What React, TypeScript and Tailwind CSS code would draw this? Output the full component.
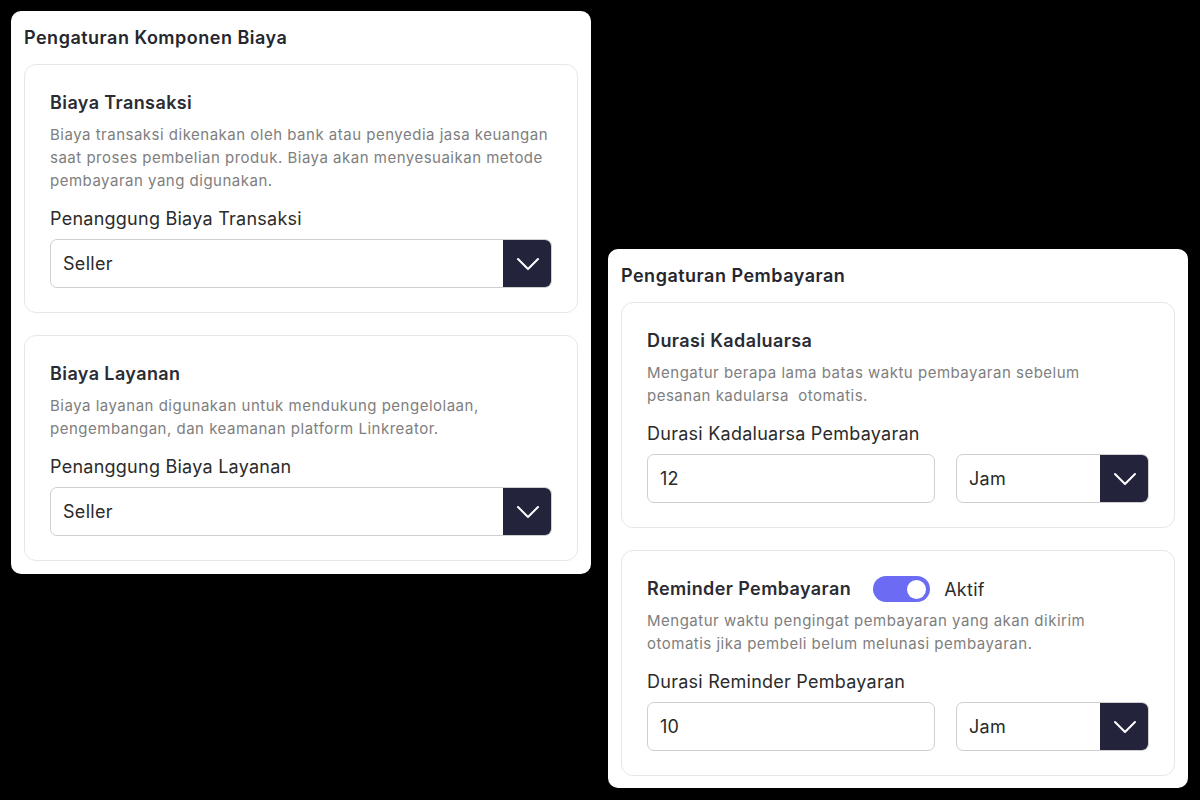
import React from 'react';

const font = { fontFamily: '"Inter", "Noto Sans", sans-serif' };

function Chevron() {
  return (
    <svg width="24" height="14" viewBox="0 0 24 14" fill="none">
      <path d="M2 2l10 10L22 2" stroke="white" strokeWidth="2" strokeLinecap="round" strokeLinejoin="round" />
    </svg>
  );
}

function Select({ value, className = '' }: { value: string; className?: string }) {
  return (
    <div className={`flex h-[49px] rounded-[7px] border border-[#cfcfcf] bg-white overflow-hidden ${className}`}>
      <div className="flex-1 flex items-center pl-[12px] text-[18px] tracking-[0.3px] text-[#2a2a2a]">{value}</div>
      <div className="w-[49px] -my-px -mr-px flex items-center justify-center bg-[#23233b] rounded-r-[8px]">
        <Chevron />
      </div>
    </div>
  );
}

function TextInput({ value }: { value: string }) {
  return (
    <div className="flex-1 h-[49px] flex items-center pl-[12px] rounded-[7px] border border-[#cfcfcf] bg-white text-[18px] tracking-[0.3px] text-[#2a2a2a]">
      {value}
    </div>
  );
}

function Section({
  title,
  extra,
  lines,
  label,
  children,
}: {
  title: string;
  extra?: React.ReactNode;
  lines: string[];
  label: string;
  children: React.ReactNode;
}) {
  return (
    <div className="rounded-[12px] border border-[#e7e7e7] px-[25px] pt-[26px] pb-[24px]">
      <div className="flex items-center h-[24px]">
        <h3 className="text-[18px] font-semibold tracking-[0.4px] text-[#2b2b33] leading-[24px]">{title}</h3>
        {extra}
      </div>
      <p className="mt-[8px] text-[15px] leading-[23px] tracking-[0.5px] text-[#7e7e7e]">
        {lines.map((l, i) => (
          <span key={i} className="block whitespace-pre">{l}</span>
        ))}
      </p>
      <div className="mt-[14px] text-[18px] leading-[26px] tracking-[0.25px] text-[#2b2b2b]">{label}</div>
      <div className="mt-[7px]">{children}</div>
    </div>
  );
}

function Toggle() {
  return (
    <div className="flex items-center ml-[22px] gap-[14px]">
      <div className="w-[57px] h-[26px] rounded-full bg-[#6b6cf3] flex items-center justify-end pr-[4px]">
        <div className="w-[19px] h-[19px] rounded-full bg-white" />
      </div>
      <span className="text-[18px] tracking-[0.3px] text-[#2b2b2b]">Aktif</span>
    </div>
  );
}

export default function App() {
  return (
    <div className="w-[1200px] h-[800px] bg-black flex items-start gap-[17px] pl-[11px] pt-[11px]" style={font}>
      <div className="w-[580px] rounded-[10px] bg-white px-[13px] pb-[13px]">
        <div className="h-[53px] flex items-center text-[18px] font-semibold tracking-[0.5px] text-[#26262e]">
          Pengaturan Komponen Biaya
        </div>
        <div className="flex flex-col gap-[22px]">
          <Section
            title="Biaya Transaksi"
            lines={[
              'Biaya transaksi dikenakan oleh bank atau penyedia jasa keuangan',
              'saat proses pembelian produk. Biaya akan menyesuaikan metode',
              'pembayaran yang digunakan.',
            ]}
            label="Penanggung Biaya Transaksi"
          >
            <Select value="Seller" />
          </Section>
          <Section
            title="Biaya Layanan"
            lines={[
              'Biaya layanan digunakan untuk mendukung pengelolaan,',
              'pengembangan, dan keamanan platform Linkreator.',
            ]}
            label="Penanggung Biaya Layanan"
          >
            <Select value="Seller" />
          </Section>
        </div>
      </div>

      <div className="w-[580px] mt-[238px] rounded-[10px] bg-white px-[13px] pb-[12px]">
        <div className="h-[53px] flex items-center text-[18px] font-semibold tracking-[0.5px] text-[#26262e]">
          Pengaturan Pembayaran
        </div>
        <div className="flex flex-col gap-[22px]">
          <Section
            title="Durasi Kadaluarsa"
            lines={['Mengatur berapa lama batas waktu pembayaran sebelum', 'pesanan kadularsa  otomatis.']}
            label="Durasi Kadaluarsa Pembayaran"
          >
            <div className="flex gap-[21px]">
              <TextInput value="12" />
              <Select value="Jam" className="w-[193px]" />
            </div>
          </Section>
          <Section
            title="Reminder Pembayaran"
            extra={<Toggle />}
            lines={[
              'Mengatur waktu pengingat pembayaran yang akan dikirim',
              'otomatis jika pembeli belum melunasi pembayaran.',
            ]}
            label="Durasi Reminder Pembayaran"
          >
            <div className="flex gap-[21px]">
              <TextInput value="10" />
              <Select value="Jam" className="w-[193px]" />
            </div>
          </Section>
        </div>
      </div>
    </div>
  );
}
